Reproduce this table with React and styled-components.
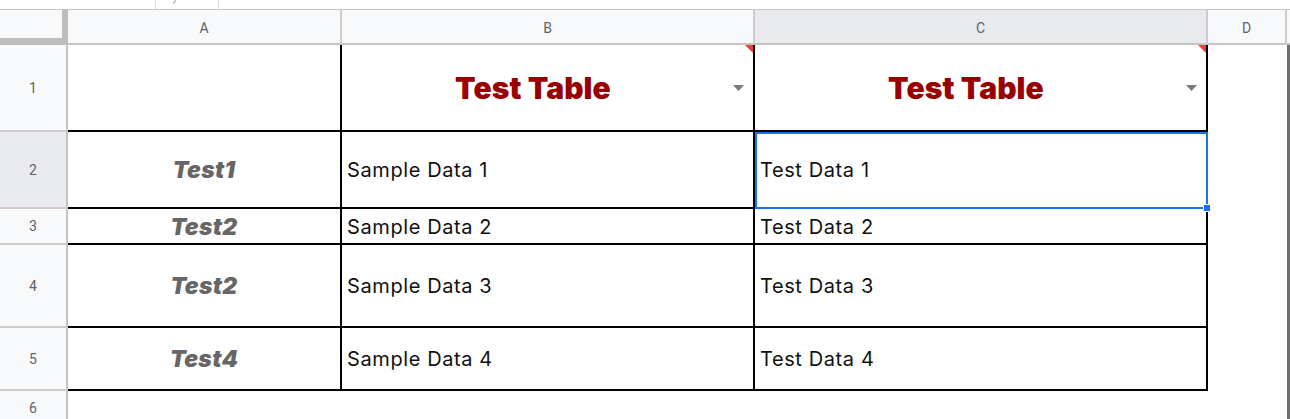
import React from 'react';
import styled, { createGlobalStyle, css } from 'styled-components';

const GlobalStyle = createGlobalStyle`
  html, body {
    margin: 0;
    padding: 0;
    background: #ffffff;
    overflow: hidden;
  }
  body {
    font-family: Roboto, "Liberation Sans", sans-serif;
  }
`;

const COLUMNS = ['A', 'B', 'C', 'D'];

const ROWS = [
  { height: 87, label: '1', a: '', b: 'Test Table', c: 'Test Table', title: true },
  { height: 77, label: '2', a: 'Test1', b: 'Sample Data 1', c: 'Test Data 1', selected: true },
  { height: 36, label: '3', a: 'Test2', b: 'Sample Data 2', c: 'Test Data 2' },
  { height: 83, label: '4', a: 'Test2', b: 'Sample Data 3', c: 'Test Data 3' },
  { height: 63, label: '5', a: 'Test4', b: 'Sample Data 4', c: 'Test Data 4' },
];

export default function App() {
  const rowTracks = ['36px', ...ROWS.map(r => `${r.height}px`), '1fr'].join(' ');

  return (
    <>
      <GlobalStyle />
      <Page>
        <TopStrip>
          <FxBox>
            {/* bottom of the formula bar's fx icon, cut off by the viewport */}
            <svg width="12" height="4" viewBox="0 0 12 4">
              <path d="M5.5 0 Q5 2.6 3 3" stroke="#b5b5b5" strokeWidth="1.4" fill="none" />
            </svg>
          </FxBox>
        </TopStrip>
        <Sheet style={{ gridTemplateRows: rowTracks }}>
          <Corner />
          {COLUMNS.map(col => (
            <ColHeader key={col} $active={col === 'C'}>
              {col}
            </ColHeader>
          ))}
          <EdgeHeader />

          {ROWS.map(row => (
            <React.Fragment key={row.label}>
              <RowHeader $active={row.selected}>{row.label}</RowHeader>
              <Cell $center>{row.a && <KeyText>{row.a}</KeyText>}</Cell>
              {row.title ? (
                <>
                  <TitleCell>
                    <TitleText>{row.b}</TitleText>
                    <DropArrow />
                    <NoteMark />
                  </TitleCell>
                  <TitleCell>
                    <TitleText>{row.c}</TitleText>
                    <DropArrow />
                    <NoteMark />
                  </TitleCell>
                </>
              ) : (
                <>
                  <Cell>
                    <DataText>{row.b}</DataText>
                  </Cell>
                  <Cell $selected={row.selected}>
                    <DataText>{row.c}</DataText>
                    {row.selected && <FillHandle />}
                  </Cell>
                </>
              )}
              <EmptyCell />
              <EdgeBar />
            </React.Fragment>
          ))}

          <RowHeader $last>6</RowHeader>
          <EmptyCell />
          <EmptyCell />
          <EmptyCell />
          <EmptyCell />
          <EdgeBar />
        </Sheet>
      </Page>
    </>
  );
}

function DropArrow() {
  return (
    <Arrow width="11" height="6" viewBox="0 0 11 6">
      <path d="M0 0h11L5.5 6z" fill="#7a7a7a" />
    </Arrow>
  );
}

const Page = styled.div`
  display: flex;
  flex-direction: column;
  width: 1290px;
  height: 419px;
`;

const TopStrip = styled.div`
  display: flex;
  height: 9px;
  padding-left: 155px;
  background: #ffffff;
`;

const FxBox = styled.div`
  width: 64px;
  height: 9px;
  overflow: hidden;
  padding-left: 14px;
  box-sizing: border-box;
  border-left: 1px solid #dadce0;
  border-right: 1px solid #dadce0;

  svg {
    display: block;
  }
`;

const Sheet = styled.div`
  flex: 1;
  display: grid;
  grid-template-columns: 68px 274px 413px 453px 79px 3px;
  min-height: 0;
`;

const headerText = css`
  font-family: Roboto, "Liberation Sans", sans-serif;
  font-size: 14px;
  color: #5f6368;
`;

const Corner = styled.div`
  box-sizing: border-box;
  background: #f8f9fa;
  border-top: 1px solid #c7c7c7;
  border-right: 6px solid #bdbdbd;
  border-bottom: 7px solid #bdbdbd;
`;

const ColHeader = styled.div`
  ${headerText}
  box-sizing: border-box;
  display: flex;
  align-items: center;
  justify-content: center;
  padding-top: 2px;
  background: ${p => (p.$active ? '#e8eaed' : '#f8f9fa')};
  border-top: 1px solid #c7c7c7;
  border-right: 2px solid #cccccc;
  border-bottom: 2px solid #c4c4c4;
`;

const EdgeHeader = styled.div`
  background: #f8f9fa;
  border-top: 1px solid #c7c7c7;
  border-bottom: 2px solid #c4c4c4;
`;

const RowHeader = styled.div`
  ${headerText}
  box-sizing: border-box;
  display: flex;
  align-items: center;
  justify-content: center;
  background: ${p => (p.$active ? '#e8eaed' : '#f8f9fa')};
  border-right: 2px solid #c4c4c4;
  border-bottom: ${p => (p.$last ? 'none' : '2px solid #cccccc')};
  ${p => p.$last && 'align-items: flex-start; padding-top: 9px;'}
`;

const Cell = styled.div`
  position: relative;
  box-sizing: border-box;
  display: flex;
  align-items: center;
  justify-content: ${p => (p.$center ? 'center' : 'flex-start')};
  padding: 1px 5px 0;
  background: #ffffff;
  border-right: 2px solid #000000;
  border-bottom: 2px solid #000000;

  ${p =>
    p.$selected &&
    css`
      z-index: 2;
      border-color: #1a73e8;
      box-shadow: inset 2px 2px 0 0 #1a73e8;
    `}
`;

const TitleCell = styled(Cell)`
  gap: 9px;
  padding: 0 9px 0 0;
`;

const EmptyCell = styled.div`
  background: #ffffff;
`;

const EdgeBar = styled.div`
  background: #6f6f6f;
`;

const TitleText = styled.span`
  flex: 1;
  text-align: center;
  font-family: Inter, "Liberation Sans", sans-serif;
  font-weight: 900;
  font-size: 30px;
  letter-spacing: 0.1px;
  color: #990000;
  white-space: nowrap;
`;

const Arrow = styled.svg`
  display: block;
  flex: none;
`;

const NoteMark = styled.span`
  position: absolute;
  top: 0;
  right: 0;
  width: 0;
  height: 0;
  border-top: 8px solid #ea4335;
  border-left: 8px solid transparent;
`;

const KeyText = styled.span`
  font-family: Inter, "Liberation Sans", sans-serif;
  font-weight: 900;
  font-style: italic;
  font-size: 23px;
  letter-spacing: 0.3px;
  color: #666666;
`;

const DataText = styled.span`
  font-family: Inter, "Liberation Sans", sans-serif;
  font-size: 20px;
  letter-spacing: 0.6px;
  color: #111111;
  white-space: nowrap;
`;

const FillHandle = styled.span`
  position: absolute;
  right: -5px;
  bottom: -5px;
  width: 6px;
  height: 6px;
  background: #1a73e8;
  border: 1px solid #ffffff;
  z-index: 3;
`;
